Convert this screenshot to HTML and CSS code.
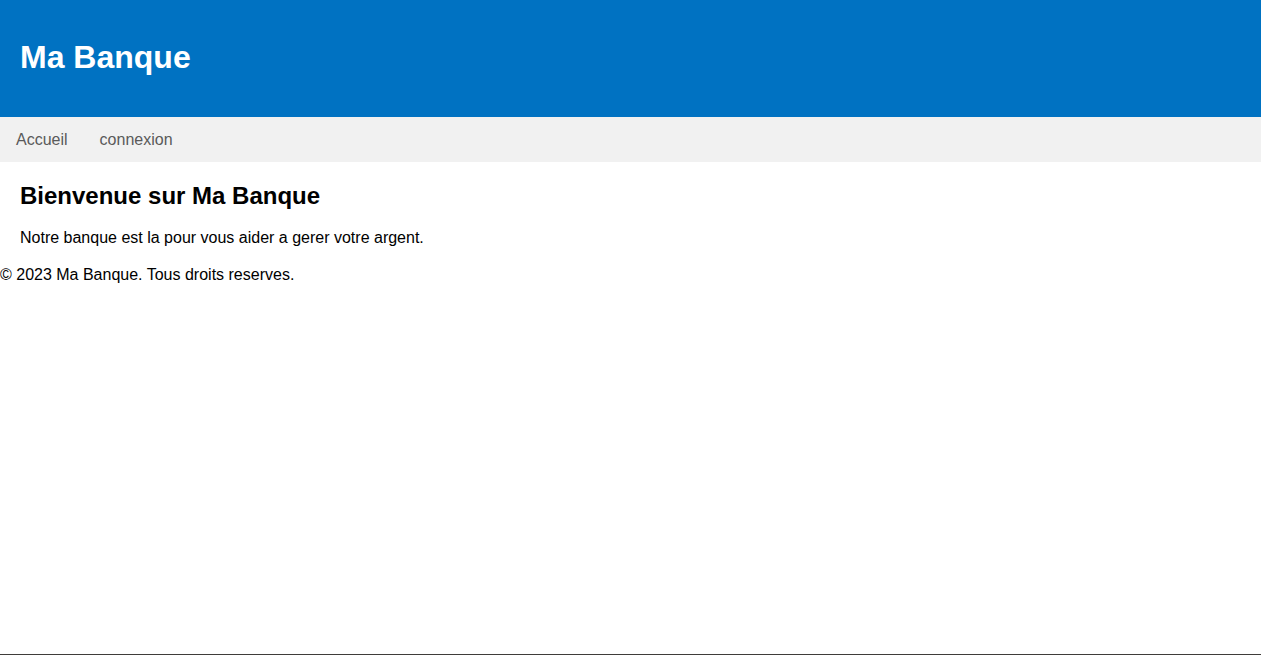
FILE: index.html
```html
<!DOCTYPE html>
<html lang="fr">
<head>
<meta charset="utf-8">
<title>Ma Banque</title>
<link rel="stylesheet" href="styles.css">
</head>
<body>
<header class="site-header">
  <h1 class="site-title">Ma Banque</h1>
</header>
<nav class="site-nav">
  <a class="nav-link" href="#">Accueil</a>
  <a class="nav-link" href="#">connexion</a>
</nav>
<main class="content">
  <h2 class="content-title">Bienvenue sur Ma Banque</h2>
  <p class="content-text">Notre banque est la pour vous aider a gerer votre argent.</p>
</main>
<footer class="site-footer">© 2023 Ma Banque. Tous droits reserves.</footer>
<div class="bottom-rule"></div>
</body>
</html>
```

FILE: styles.css
```css
html, body {
  margin: 0;
  padding: 0;
}
body {
  font-family: "Liberation Sans", Arial, sans-serif;
  font-size: 16px;
  color: #000;
  background: #fff;
  min-height: 655px;
  display: flex;
  flex-direction: column;
}
.site-header {
  background: #0072c2;
  color: #fff;
  padding: 39px 20px 42px;
}
.site-title {
  margin: 0;
  font-size: 32px;
  font-weight: bold;
  line-height: 36px;
}
.site-nav {
  background: #f1f1f1;
  height: 45px;
  display: flex;
  align-items: center;
}
.nav-link {
  color: #5a5a5a;
  text-decoration: none;
  padding: 0 16px;
  line-height: 18px;
}
.content {
  padding: 20px 20px 19px;
}
.content-title {
  margin: 0 0 19px;
  font-size: 24px;
  font-weight: bold;
  line-height: 28px;
}
.content-text {
  margin: 0;
  line-height: 18px;
}
.site-footer {
  line-height: 18px;
}
.bottom-rule {
  margin-top: auto;
  height: 1px;
  background: #3f3d3a;
}
```
